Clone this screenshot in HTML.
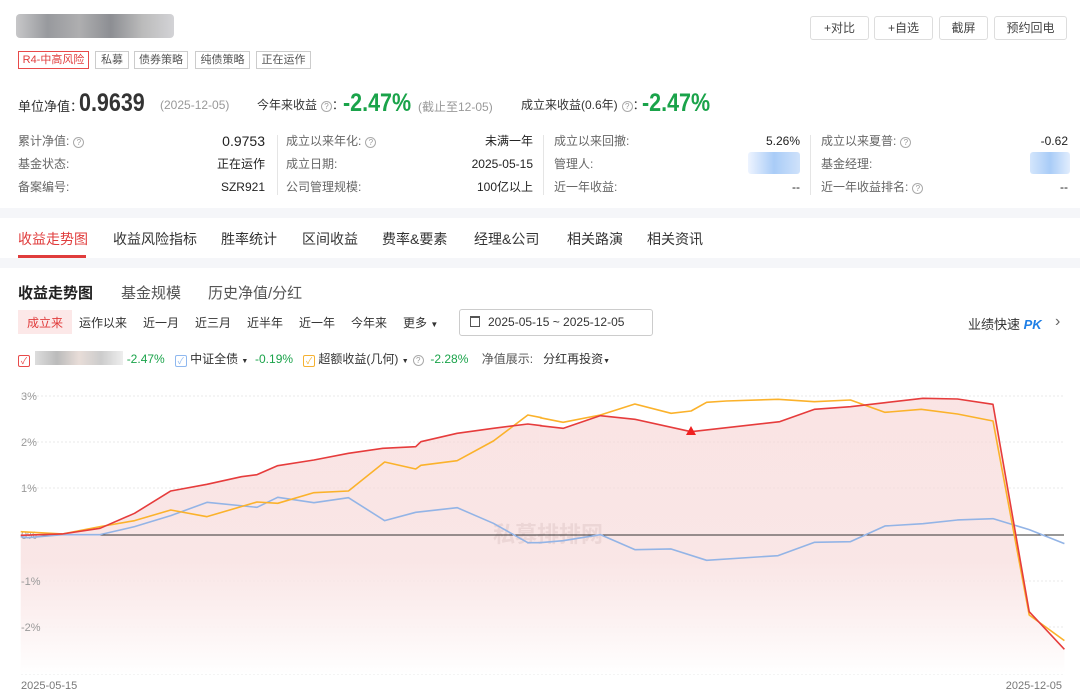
<!DOCTYPE html>
<html><head><meta charset="utf-8"><style>
*{margin:0;padding:0;box-sizing:border-box}
body{width:1080px;height:689px;overflow:hidden;background:#fff;font-family:"Liberation Sans","Noto Sans CJK SC",sans-serif;color:#333;position:relative}
.a{position:absolute;white-space:nowrap}
.tag{position:absolute;top:51px;height:18px;border:1px solid #ccc;font-size:11px;line-height:16px;text-align:center;color:#555}
.btn{position:absolute;top:16px;height:24px;border:1px solid #ddd;border-radius:3px;font-size:12px;line-height:22px;text-align:center;color:#444}
.lbl{font-size:12px;color:#666;line-height:16px}
.val{font-size:12px;color:#222;text-align:right;line-height:16px}
.q{display:inline-block;width:11px;height:11px;border:1px solid #aaa;border-radius:50%;font-size:8px;line-height:9px;text-align:center;color:#999;vertical-align:0px;margin-left:4px}
.sep{position:absolute;width:1px;background:#e5e5e5;top:135px;height:60px}
.tab{position:absolute;top:229px;font-size:14px;color:#333}
.rg{position:absolute;top:314px;font-size:12px;color:#333}
.cb{display:inline-block;width:12px;height:12px;border:1px solid;border-radius:2px;font-size:9px;line-height:10px;text-align:center;vertical-align:-1px}
.g{color:#1aa34a}
.big{font-size:25px;font-weight:bold;transform-origin:0 50%;transform:scaleX(.86)}
</style></head><body>
<div class="a" style="left:16px;top:14px;width:158px;height:24px;background:linear-gradient(90deg,#b9b9bb,#7e8085,#9a9a9c,#707278,#aaa,#c8c8cc);border-radius:4px;opacity:.8"></div>
<div class="tag" style="left:18px;width:71px;border-color:#e84a4a;color:#e03c3c">R4-中高风险</div>
<div class="tag" style="left:95px;width:34px">私募</div>
<div class="tag" style="left:134px;width:54px">债券策略</div>
<div class="tag" style="left:195px;width:55px">纯债策略</div>
<div class="tag" style="left:256px;width:55px">正在运作</div>
<div class="btn" style="left:810px;width:59px">+对比</div>
<div class="btn" style="left:874px;width:59px">+自选</div>
<div class="btn" style="left:939px;width:49px">截屏</div>
<div class="btn" style="left:994px;width:73px">预约回电</div>

<div class="a" style="left:18px;top:96px;font-size:13px;color:#333">单位净值：</div>
<div class="a big" style="left:79px;top:89px;color:#333">0.9639</div>
<div class="a" style="left:160px;top:98px;font-size:12px;color:#999">(2025-12-05)</div>
<div class="a" style="left:257px;top:96px;font-size:12px;color:#333">今年来收益<span class="q">?</span>：</div>
<div class="a g big" style="left:343px;top:89px">-2.47%</div>
<div class="a" style="left:418px;top:98px;font-size:12px;color:#999">(截止至12-05)</div>
<div class="a" style="left:521px;top:96px;font-size:12px;color:#333">成立来收益(0.6年)<span class="q">?</span>：</div>
<div class="a g big" style="left:642px;top:89px">-2.47%</div>

<div class="a lbl" style="left:18px;top:133px">累计净值:<span class="q">?</span></div>
<div class="a lbl" style="left:18px;top:156px">基金状态:</div>
<div class="a lbl" style="left:18px;top:179px">备案编号:</div>
<div class="a val" style="left:180px;width:85px;top:133px;font-size:14px">0.9753</div>
<div class="a val" style="left:180px;width:85px;top:156px">正在运作</div>
<div class="a val" style="left:180px;width:85px;top:179px">SZR921</div>
<div class="sep" style="left:277px"></div>
<div class="a lbl" style="left:286px;top:133px">成立以来年化:<span class="q">?</span></div>
<div class="a lbl" style="left:286px;top:156px">成立日期:</div>
<div class="a lbl" style="left:286px;top:179px">公司管理规模:</div>
<div class="a val" style="left:430px;width:103px;top:133px">未满一年</div>
<div class="a val" style="left:430px;width:103px;top:156px">2025-05-15</div>
<div class="a val" style="left:430px;width:103px;top:179px">100亿以上</div>
<div class="sep" style="left:543px"></div>
<div class="a lbl" style="left:554px;top:133px">成立以来回撤:</div>
<div class="a lbl" style="left:554px;top:156px">管理人:</div>
<div class="a lbl" style="left:554px;top:179px">近一年收益:</div>
<div class="a val" style="left:700px;width:100px;top:133px">5.26%</div>
<div class="a" style="left:748px;top:152px;width:52px;height:22px;background:linear-gradient(90deg,#eef4ff,#a9ccf7,#cfe2fb);border-radius:3px"></div>
<div class="a val" style="left:700px;width:100px;top:179px">--</div>
<div class="sep" style="left:810px"></div>
<div class="a lbl" style="left:821px;top:133px">成立以来夏普:<span class="q">?</span></div>
<div class="a lbl" style="left:821px;top:156px">基金经理:</div>
<div class="a lbl" style="left:821px;top:179px">近一年收益排名:<span class="q">?</span></div>
<div class="a val" style="left:968px;width:100px;top:133px">-0.62</div>
<div class="a" style="left:1030px;top:152px;width:40px;height:22px;background:linear-gradient(90deg,#d4e6fc,#a9ccf7,#e1edfd);border-radius:3px"></div>
<div class="a val" style="left:968px;width:100px;top:179px">--</div>

<div class="a" style="left:0;top:208px;width:1080px;height:10px;background:#f5f6f9"></div>
<div class="tab" style="left:18px;color:#e03c3c">收益走势图</div>
<div class="a" style="left:18px;top:255px;width:68px;height:3px;background:#e03c3c"></div>
<div class="tab" style="left:113px">收益风险指标</div>
<div class="tab" style="left:221px">胜率统计</div>
<div class="tab" style="left:302px">区间收益</div>
<div class="tab" style="left:382px">费率&amp;要素</div>
<div class="tab" style="left:474px">经理&amp;公司</div>
<div class="tab" style="left:567px">相关路演</div>
<div class="tab" style="left:647px">相关资讯</div>
<div class="a" style="left:0;top:258px;width:1080px;height:10px;background:#f5f6f9"></div>

<div class="a" style="left:18px;top:282px;font-size:15px;font-weight:bold;color:#222">收益走势图</div>
<div class="a" style="left:121px;top:282px;font-size:15px;color:#555">基金规模</div>
<div class="a" style="left:208px;top:282px;font-size:15px;color:#555">历史净值/分红</div>

<div class="a" style="left:18px;top:310px;width:54px;height:24px;background:#fce8e8"></div>
<div class="rg" style="left:27px;color:#e03c3c">成立来</div>
<div class="rg" style="left:79px">运作以来</div>
<div class="rg" style="left:143px">近一月</div>
<div class="rg" style="left:195px">近三月</div>
<div class="rg" style="left:247px">近半年</div>
<div class="rg" style="left:299px">近一年</div>
<div class="rg" style="left:351px">今年来</div>
<div class="rg" style="left:403px">更多 <span style="font-size:8px">▼</span></div>
<div class="a" style="left:459px;top:309px;width:194px;height:27px;border:1px solid #ccc;border-radius:3px;font-size:12px;line-height:25px;padding-left:28px;color:#333">2025-05-15 ~ 2025-12-05</div>
<div class="a" style="left:470px;top:316px;width:10px;height:11px;border:1px solid #555;border-top-width:2px"></div>
<div class="a" style="left:968px;top:314px;font-size:13px;color:#333">业绩快速 <b style="color:#1f7fe6;font-style:italic">PK</b></div>
<div class="a" style="left:1055px;top:312px;font-size:16px;color:#666;line-height:20px">›</div>

<div class="a" style="left:18px;top:350px;font-size:12px">
<span class="cb" style="border-color:#e84a4a;color:#e84a4a">✓</span>
<span style="display:inline-block;width:88px;height:14px;background:linear-gradient(90deg,#ddd,#bbb,#e8ddd8,#ccc,#eee);vertical-align:-2px;margin-left:2px"></span>
<span class="g">-2.47%</span>&nbsp;&nbsp;
<span class="cb" style="border-color:#8fb8ef;color:#8fb8ef">✓</span> 中证全债 <span style="font-size:7px">▼</span>&nbsp; <span class="g">-0.19%</span>&nbsp;&nbsp;
<span class="cb" style="border-color:#f5b232;color:#f5b232">✓</span> 超额收益(几何) <span style="font-size:7px">▼</span><span class="q">?</span>&nbsp; <span class="g">-2.28%</span>&nbsp;&nbsp;&nbsp;
<span style="color:#555">净值展示:</span>&nbsp;&nbsp; 分红再投资<span style="font-size:7px">▼</span></div>

<svg class="a" style="left:0;top:380px" width="1080" height="309" viewBox="0 0 1080 309">
<defs><linearGradient id="gf" gradientUnits="userSpaceOnUse" x1="0" y1="40" x2="0" y2="882"><stop offset="0" stop-color="#f6d3d3" stop-opacity=".6"/><stop offset=".6" stop-color="#f8e0e0" stop-opacity=".8"/><stop offset="1" stop-color="#fff"/></linearGradient></defs>
<g stroke="#e8e8e8" stroke-dasharray="2,2">
<line x1="21" x2="1064" y1="16" y2="16"/><line x1="21" x2="1064" y1="62" y2="62"/><line x1="21" x2="1064" y1="108" y2="108"/><line x1="21" x2="1064" y1="201" y2="201"/><line x1="21" x2="1064" y1="247" y2="247"/><line x1="21" x2="1064" y1="294" y2="294"/></g>
<g transform="scale(0.345,0.3333)">
<polygon fill="url(#gf)" points="60,466 180,462 290,445 390,400 495,333 600,313 700,290 745,284 805,257 910,240 1010,220 1110,205 1205,200 1220,185 1325,160 1430,145 1530,132 1565.2,136.5 1565.2,882 60,882"/>
</g>
<g transform="translate(540,0) scale(0.345,0.3333)">
<polygon fill="url(#gf)" points="0,137 67,145 175,107 275,118 438,155 695,125 795,88 900,80 1000,68 1110,55 1210,57 1313,73 1418,695 1520,808 1520,882 0,882"/>
</g>
<g fill="#999" font-size="11" font-family="Liberation Sans,sans-serif">
<text x="21" y="20">3%</text><text x="21" y="66">2%</text><text x="21" y="112">1%</text><text x="21" y="159">0%</text><text x="21" y="205">-1%</text><text x="21" y="251">-2%</text>
<text x="21" y="309" fill="#777">2025-05-15</text><text x="1062" y="309" fill="#777" text-anchor="end">2025-12-05</text></g>
<text x="548" y="162" font-size="22" font-weight="bold" fill="#ecd6d6" text-anchor="middle" font-family="Noto Sans CJK SC,sans-serif">私募排排网</text>
<line x1="21" x2="1064" y1="155" y2="155" stroke="#333" stroke-width="1"/>
<g fill="none" stroke-width="1.6" stroke-linejoin="round">
<g transform="scale(0.345,0.3333)">
<polyline vector-effect="non-scaling-stroke" stroke="#93b4e6" points="60,470 80,473 180,464 290,464 390,440 495,407 600,367 745,382 805,352 910,368 1010,353 1115,422 1205,397 1325,383 1430,430 1530,488 1570,488"/>
<polyline vector-effect="non-scaling-stroke" stroke="#fbb22b" points="60,455 180,462 290,440 390,422 495,390 600,410 745,366 805,370 910,338 1010,333 1115,246 1205,267 1220,256 1325,242 1430,183 1530,105 1570,113"/>
<polyline vector-effect="non-scaling-stroke" stroke="#e63c3c" points="60,466 180,462 290,445 390,400 495,333 600,313 700,290 745,284 805,257 910,240 1010,220 1110,205 1205,200 1220,185 1325,160 1430,145 1530,132 1570,137"/>
</g>
<g transform="translate(540,0) scale(0.345,0.3333)">
<polyline vector-effect="non-scaling-stroke" stroke="#93b4e6" points="0,488 67,482 175,464 275,509 380,507 483,541 690,527 795,487 900,485 1000,438 1110,431 1210,420 1313,416 1418,449 1520,491"/>
<polyline vector-effect="non-scaling-stroke" stroke="#fbb22b" points="0,113 67,127 175,105 275,72 380,100 438,93 483,67 540,63 690,58 795,65 900,60 1000,97 1105,88 1210,102 1313,123 1418,705 1520,782"/>
<polyline vector-effect="non-scaling-stroke" stroke="#e63c3c" points="0,137 67,145 175,107 275,118 438,155 695,125 795,88 900,80 1000,68 1110,55 1210,57 1313,73 1418,695 1520,808"/>
</g></g>
<polygon points="691,46 686,55 696,55" fill="#f02020"/>
</svg>
</body></html>
